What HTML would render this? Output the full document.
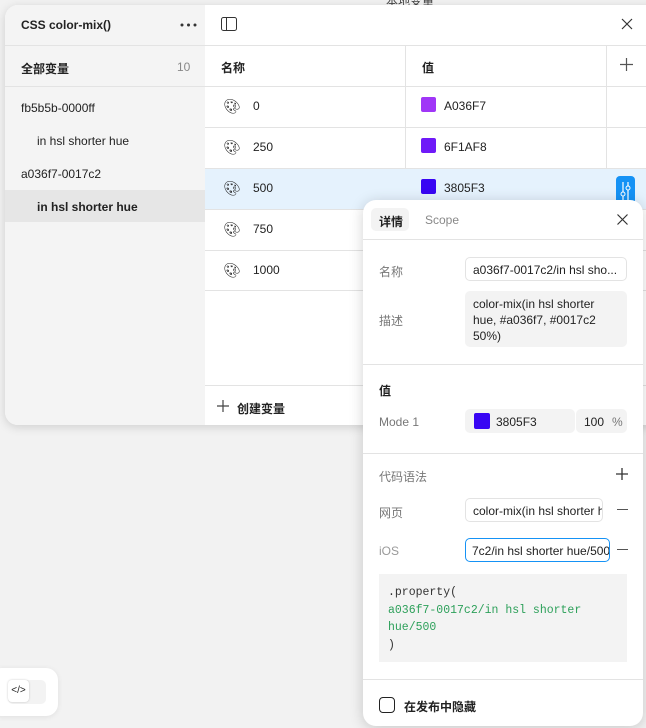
<!DOCTYPE html>
<html><head><meta charset="utf-8"><style>
*{box-sizing:border-box;margin:0;padding:0}
body{width:646px;height:728px;overflow:hidden;background:#f2f2f2;font-family:"Liberation Sans","Noto Sans CJK SC",sans-serif;font-size:12px;color:#222;position:relative}
.abs{position:absolute}
.panel{left:5px;top:5px;width:660px;height:420px;background:#fff;border-radius:13px;box-shadow:0 2px 10px rgba(0,0,0,.15);overflow:hidden}
.side{left:0;top:0;width:200px;height:420px;background:#f4f4f4}
.hl{background:#e6e6e6}
.b{font-weight:bold}
.line{background:#e3e3e3}
.pop{left:363px;top:200px;width:280px;height:526px;background:#fff;border-radius:13px;box-shadow:0 2px 14px rgba(0,0,0,.18)}
.lbl{color:#777}
.fld{background:#f3f3f3;border-radius:5px}
.sw{width:15px;height:15px;border-radius:2px}
</style></head><body>
<div class="abs" style="left:386px;top:-8px;color:#444;font-size:12px">本地变量</div>
<div class="abs panel">
 <div class="abs side">
  <div class="abs b" style="left:16px;top:13px">CSS color-mix()</div>
  <svg class="abs" style="left:175px;top:18px" width="18" height="4"><circle cx="2" cy="2" r="1.5" fill="#333"/><circle cx="8.5" cy="2" r="1.5" fill="#333"/><circle cx="15" cy="2" r="1.5" fill="#333"/></svg>
  <div class="abs line" style="left:0;top:40px;width:200px;height:1px"></div>
  <div class="abs b" style="left:16px;top:55px">全部变量</div>
  <div class="abs" style="left:172px;top:55px;color:#888">10</div>
  <div class="abs line" style="left:0;top:81px;width:200px;height:1px"></div>
  <div class="abs" style="left:16px;top:96px">fb5b5b-0000ff</div>
  <div class="abs" style="left:32px;top:129px">in hsl shorter hue</div>
  <div class="abs" style="left:16px;top:162px">a036f7-0017c2</div>
  <div class="abs hl" style="left:0;top:185px;width:200px;height:32px"></div>
  <div class="abs b" style="left:32px;top:195px">in hsl shorter hue</div>
 </div>
 <svg class="abs" style="left:216px;top:12px" width="16" height="14"><rect x="0.5" y="0.5" width="15" height="13" rx="2" fill="none" stroke="#333"/><line x1="5.5" y1="0.5" x2="5.5" y2="13.5" stroke="#333"/></svg>
 <svg class="abs" style="left:616px;top:13px" width="12" height="12"><path d="M1 1L11 11M11 1L1 11" stroke="#333" stroke-width="1.2"/></svg>
 <div class="abs line" style="left:200px;top:40px;width:460px;height:1px"></div>
 <div class="abs line" style="left:400px;top:41px;width:1px;height:164px"></div>
 <div class="abs line" style="left:601px;top:41px;width:1px;height:164px"></div>
 <div class="abs b" style="left:216px;top:54px">名称</div>
 <div class="abs b" style="left:417px;top:54px">值</div>
 <svg class="abs" style="left:615px;top:53px" width="13" height="13"><path d="M6.5 0v13M0 6.5h13" stroke="#555" stroke-width="1.2"/></svg>
 <div class="abs" style="left:200px;top:163px;width:460px;height:41px;background:#e5f2fd"></div>
 <div class="abs line" style="left:200px;top:81px;width:460px;height:1px"></div>
 <div class="abs line" style="left:200px;top:122px;width:460px;height:1px"></div>
 <div class="abs line" style="left:200px;top:163px;width:460px;height:1px"></div>
 <div class="abs line" style="left:200px;top:204px;width:460px;height:1px"></div>
 <div class="abs line" style="left:200px;top:245px;width:460px;height:1px"></div>
 <div class="abs line" style="left:200px;top:285px;width:460px;height:1px"></div>
 <div class="abs line" style="left:200px;top:380px;width:460px;height:1px"></div>
 <div class="abs" style="left:218px;top:93px;font-size:14px">🎨︎</div>
 <div class="abs" style="left:248px;top:94px">0</div>
 <div class="abs" style="left:218px;top:134px;font-size:14px">🎨︎</div>
 <div class="abs" style="left:248px;top:135px">250</div>
 <div class="abs" style="left:218px;top:175px;font-size:14px">🎨︎</div>
 <div class="abs" style="left:248px;top:176px">500</div>
 <div class="abs" style="left:218px;top:216px;font-size:14px">🎨︎</div>
 <div class="abs" style="left:248px;top:217px">750</div>
 <div class="abs" style="left:218px;top:257px;font-size:14px">🎨︎</div>
 <div class="abs" style="left:248px;top:258px">1000</div>
 <div class="abs sw" style="left:416px;top:92px;background:#a036f7"></div><div class="abs" style="left:439px;top:94px">A036F7</div>
 <div class="abs sw" style="left:416px;top:133px;background:#6f1af8"></div><div class="abs" style="left:439px;top:135px">6F1AF8</div>
 <div class="abs sw" style="left:416px;top:174px;background:#3805f3"></div><div class="abs" style="left:439px;top:176px">3805F3</div>
 <div class="abs" style="left:611px;top:171px;width:19px;height:30px;background:#1592f5;border-radius:4px"></div>
 <svg class="abs" style="left:614px;top:176px" width="13" height="20"><path d="M4 1v18M9 1v18" stroke="#fff" stroke-width="1.2"/><circle cx="4" cy="13" r="2" fill="#1592f5" stroke="#fff"/><circle cx="9" cy="7" r="2" fill="#1592f5" stroke="#fff"/></svg>
 <svg class="abs" style="left:212px;top:395px" width="12" height="12"><path d="M6 0v12M0 6h12" stroke="#444" stroke-width="1.2"/></svg>
 <div class="abs b" style="left:232px;top:395px">创建变量</div>
</div>
<div class="abs" style="left:-10px;top:668px;width:68px;height:48px;background:#fff;border-radius:12px;box-shadow:0 1px 6px rgba(0,0,0,.08)"></div>
<div class="abs" style="left:8px;top:680px;width:38px;height:24px;background:#f3f3f3;border-radius:5px"></div>
<div class="abs" style="left:8px;top:680px;width:21px;height:22px;background:#fff;border-radius:4px;box-shadow:0 0 2px rgba(0,0,0,.2);font-size:10px;text-align:center;line-height:22px">&lt;/&gt;</div>
<div class="abs pop">
 <div class="abs fld" style="left:8px;top:8px;width:38px;height:23px"></div>
 <div class="abs b" style="left:16px;top:13px">详情</div>
 <div class="abs" style="left:62px;top:13px;color:#888">Scope</div>
 <svg class="abs" style="left:254px;top:14px" width="11" height="11"><path d="M0.5 0.5L10.5 10.5M10.5 0.5L0.5 10.5" stroke="#333" stroke-width="1.2"/></svg>
 <div class="abs line" style="left:0;top:39px;width:280px;height:1px"></div>
 <div class="abs lbl" style="left:16px;top:63px">名称</div>
 <div class="abs" style="left:102px;top:57px;width:162px;height:24px;border:1px solid #e3e3e3;border-radius:5px;padding:5px 7px;white-space:nowrap;overflow:hidden">a036f7-0017c2/in hsl sho...</div>
 <div class="abs lbl" style="left:16px;top:112px">描述</div>
 <div class="abs fld" style="left:102px;top:91px;width:162px;height:56px;padding:5px 8px;line-height:16px">color-mix(in hsl shorter hue, #a036f7, #0017c2 50%)</div>
 <div class="abs line" style="left:0;top:164px;width:280px;height:1px"></div>
 <div class="abs b" style="left:16px;top:182px">值</div>
 <div class="abs lbl" style="left:16px;top:215px">Mode 1</div>
 <div class="abs fld" style="left:102px;top:209px;width:110px;height:24px"></div>
 <div class="abs fld" style="left:213px;top:209px;width:51px;height:24px"></div>
 <div class="abs sw" style="left:111px;top:213px;width:16px;height:16px;background:#3805f3"></div>
 <div class="abs" style="left:133px;top:215px">3805F3</div>
 <div class="abs" style="left:221px;top:215px">100</div>
 <div class="abs lbl" style="left:249px;top:215px">%</div>
 <div class="abs line" style="left:0;top:253px;width:280px;height:1px"></div>
 <div class="abs lbl" style="left:16px;top:268px">代码语法</div>
 <svg class="abs" style="left:253px;top:268px" width="12" height="12"><path d="M6 0v12M0 6h12" stroke="#333" stroke-width="1.3"/></svg>
 <div class="abs lbl" style="left:16px;top:304px">网页</div>
 <div class="abs" style="left:102px;top:298px;width:138px;height:24px;border:1px solid #e3e3e3;border-radius:5px;padding:5px 7px;white-space:nowrap;overflow:hidden">color-mix(in hsl shorter hue</div>
 <div class="abs" style="left:254px;top:309px;width:11px;height:1.3px;background:#555"></div>
 <div class="abs lbl" style="left:16px;top:344px;color:#999">iOS</div>
 <div class="abs" style="left:102px;top:338px;width:145px;height:24px;border:1px solid #1592f5;border-radius:5px;padding:5px 6px;white-space:nowrap;overflow:hidden">7c2/in hsl shorter hue/500</div>
 <div class="abs" style="left:254px;top:349px;width:11px;height:1.3px;background:#555"></div>
 <div class="abs" style="left:16px;top:374px;width:248px;height:88px;background:#f3f3f3;padding:10px 9px;font-family:'Liberation Mono',monospace;font-size:11.5px;line-height:17.5px;color:#333">.property(<br><span style="color:#2da05a">a036f7-0017c2/in hsl shorter<br>hue/500</span><br>)</div>
 <div class="abs line" style="left:0;top:479px;width:280px;height:1px"></div>
 <div class="abs" style="left:16px;top:497px;width:16px;height:16px;border:1.5px solid #222;border-radius:4px"></div>
 <div class="abs b" style="left:41px;top:498px">在发布中隐藏</div>
</div>
</body></html>
